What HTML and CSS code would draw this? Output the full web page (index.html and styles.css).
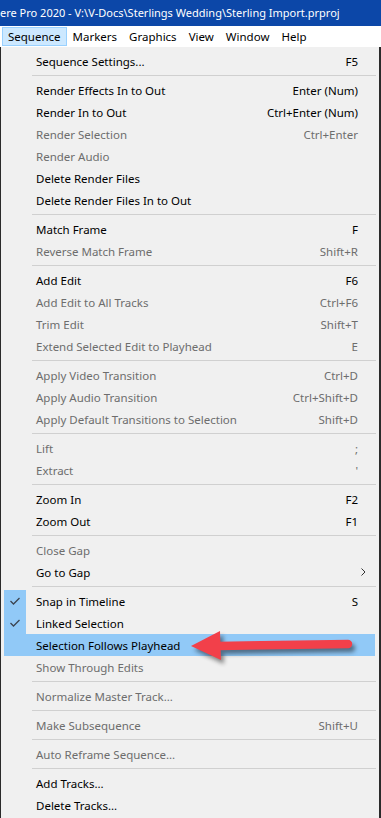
FILE: index.html
```html
<!DOCTYPE html>
<html lang="en">

<head>
    <meta charset="UTF-8">
    <meta name="viewport" content="width=device-width, initial-scale=1.0">
    <title>Sequence Menu</title>
    <link rel="stylesheet" href="styles.css">
</head>

<body>
    <div class="titlebar">ere Pro 2020 - V:\V-Docs\Sterlings Wedding\Sterling Import.prproj</div>

    <nav class="menubar">
        <span class="menubar-item active">Sequence</span>
        <span class="menubar-item">Markers</span>
        <span class="menubar-item">Graphics</span>
        <span class="menubar-item">View</span>
        <span class="menubar-item">Window</span>
        <span class="menubar-item">Help</span>
    </nav>

    <div class="dropdown">
        <div class="item"><span class="check"></span><span class="label">Sequence Settings...</span><span class="key">F5</span></div>
        <div class="sep"></div>

        <div class="item"><span class="check"></span><span class="label">Render Effects In to Out</span><span class="key">Enter (Num)</span></div>
        <div class="item"><span class="check"></span><span class="label">Render In to Out</span><span class="key">Ctrl+Enter (Num)</span></div>
        <div class="item disabled"><span class="check"></span><span class="label">Render Selection</span><span class="key">Ctrl+Enter</span></div>
        <div class="item disabled"><span class="check"></span><span class="label">Render Audio</span><span class="key"></span></div>
        <div class="item"><span class="check"></span><span class="label">Delete Render Files</span><span class="key"></span></div>
        <div class="item"><span class="check"></span><span class="label">Delete Render Files In to Out</span><span class="key"></span></div>
        <div class="sep"></div>

        <div class="item"><span class="check"></span><span class="label">Match Frame</span><span class="key">F</span></div>
        <div class="item disabled"><span class="check"></span><span class="label">Reverse Match Frame</span><span class="key">Shift+R</span></div>
        <div class="sep"></div>

        <div class="item"><span class="check"></span><span class="label">Add Edit</span><span class="key">F6</span></div>
        <div class="item disabled"><span class="check"></span><span class="label">Add Edit to All Tracks</span><span class="key">Ctrl+F6</span></div>
        <div class="item disabled"><span class="check"></span><span class="label">Trim Edit</span><span class="key">Shift+T</span></div>
        <div class="item disabled"><span class="check"></span><span class="label">Extend Selected Edit to Playhead</span><span class="key">E</span></div>
        <div class="sep"></div>

        <div class="item disabled"><span class="check"></span><span class="label">Apply Video Transition</span><span class="key">Ctrl+D</span></div>
        <div class="item disabled"><span class="check"></span><span class="label">Apply Audio Transition</span><span class="key">Ctrl+Shift+D</span></div>
        <div class="item disabled"><span class="check"></span><span class="label">Apply Default Transitions to Selection</span><span class="key">Shift+D</span></div>
        <div class="sep"></div>

        <div class="item disabled"><span class="check"></span><span class="label">Lift</span><span class="key">;</span></div>
        <div class="item disabled"><span class="check"></span><span class="label">Extract</span><span class="key">'</span></div>
        <div class="sep"></div>

        <div class="item"><span class="check"></span><span class="label">Zoom In</span><span class="key">F2</span></div>
        <div class="item"><span class="check"></span><span class="label">Zoom Out</span><span class="key">F1</span></div>
        <div class="sep"></div>

        <div class="item disabled"><span class="check"></span><span class="label">Close Gap</span><span class="key"></span></div>
        <div class="item"><span class="check"></span><span class="label">Go to Gap</span><span class="key"></span>
            <span class="more">
                <svg width="5" height="8" viewBox="0 0 5 8"><polyline points="0.5,0.5 4,4 0.5,7.5" fill="none" stroke="#333" stroke-width="1"/></svg>
            </span>
        </div>
        <div class="sep"></div>

        <div class="item checked">
            <span class="check"><svg width="22" height="22" viewBox="0 0 22 22"><polyline points="6.5,11 9.5,14 15.5,8" fill="none" stroke="#3c4450" stroke-width="1.3"/></svg></span>
            <span class="label">Snap in Timeline</span><span class="key">S</span>
        </div>
        <div class="item checked">
            <span class="check"><svg width="22" height="22" viewBox="0 0 22 22"><polyline points="6.5,11 9.5,14 15.5,8" fill="none" stroke="#3c4450" stroke-width="1.3"/></svg></span>
            <span class="label">Linked Selection</span><span class="key"></span>
        </div>
        <div class="item hover"><span class="check"></span><span class="label">Selection Follows Playhead</span><span class="key"></span>
            <svg class="pointer" width="175" height="50" viewBox="0 0 175 50">
                <line x1="34" y1="26" x2="163" y2="24" stroke="#f2404a" stroke-width="8.5" stroke-linecap="round"/>
                <polygon points="6,26 35,11 36,40" fill="#f2404a"/>
            </svg>
        </div>
        <div class="item disabled"><span class="check"></span><span class="label">Show Through Edits</span><span class="key"></span></div>
        <div class="sep"></div>

        <div class="item disabled"><span class="check"></span><span class="label">Normalize Master Track...</span><span class="key"></span></div>
        <div class="sep"></div>

        <div class="item disabled"><span class="check"></span><span class="label">Make Subsequence</span><span class="key">Shift+U</span></div>
        <div class="sep"></div>

        <div class="item disabled"><span class="check"></span><span class="label">Auto Reframe Sequence...</span><span class="key"></span></div>
        <div class="sep"></div>

        <div class="item"><span class="check"></span><span class="label">Add Tracks...</span><span class="key"></span></div>
        <div class="item"><span class="check"></span><span class="label">Delete Tracks...</span><span class="key"></span></div>
    </div>
</body>

</html>
```

FILE: styles.css
```css
* {
    box-sizing: border-box;
    margin: 0;
    padding: 0;
}

body {
    font-family: 'Segoe UI', 'Noto Sans', sans-serif;
    font-size: 11.5px;
    background-color: #2a2a2a;
    overflow: hidden;
    height: 818px;
}

.titlebar {
    height: 26px;
    line-height: 26px;
    background-color: #0c47a8;
    color: #fff;
    font-size: 11px;
    white-space: nowrap;
    overflow: hidden;
}

.menubar {
    height: 21px;
    background-color: #fff;
    display: flex;
    align-items: center;
    padding-left: 2px;
}

.menubar-item {
    height: 19px;
    line-height: 18px;
    padding: 0 5px;
    border: 1px solid transparent;
    color: #000;
}

.menubar-item.active {
    background-color: #cce8ff;
    border-color: #99d1ff;
}

.dropdown {
    margin-left: 1px;
    width: 378px;
    height: 771px;
    background-color: #f0f0f0;
    padding: 3px 4px 0 3px;
    overflow: hidden;
}

.item {
    position: relative;
    display: flex;
    align-items: center;
    height: 22px;
    color: #000;
}

.item.disabled {
    color: #6d6d6d;
}

.item.hover {
    background-color: #91c9f7;
}

.check {
    width: 22px;
    height: 22px;
    flex-shrink: 0;
}

.item.checked .check {
    background-color: #91c9f7;
}

.label {
    flex: 1;
    padding-left: 10px;
    white-space: nowrap;
}

.key {
    padding-right: 17px;
    white-space: nowrap;
}

.more {
    position: absolute;
    right: 9px;
    top: 7px;
    display: flex;
}

.sep {
    height: 7px;
    margin: 0 -1px 0 28px;
    display: flex;
    align-items: center;
}

.sep::before {
    content: '';
    flex: 1;
    height: 1px;
    background-color: #d0d0d0;
}

.pointer {
    position: absolute;
    left: 181px;
    top: -14px;
    filter: drop-shadow(3px 4px 2px rgba(0, 0, 0, 0.45));
}
```
